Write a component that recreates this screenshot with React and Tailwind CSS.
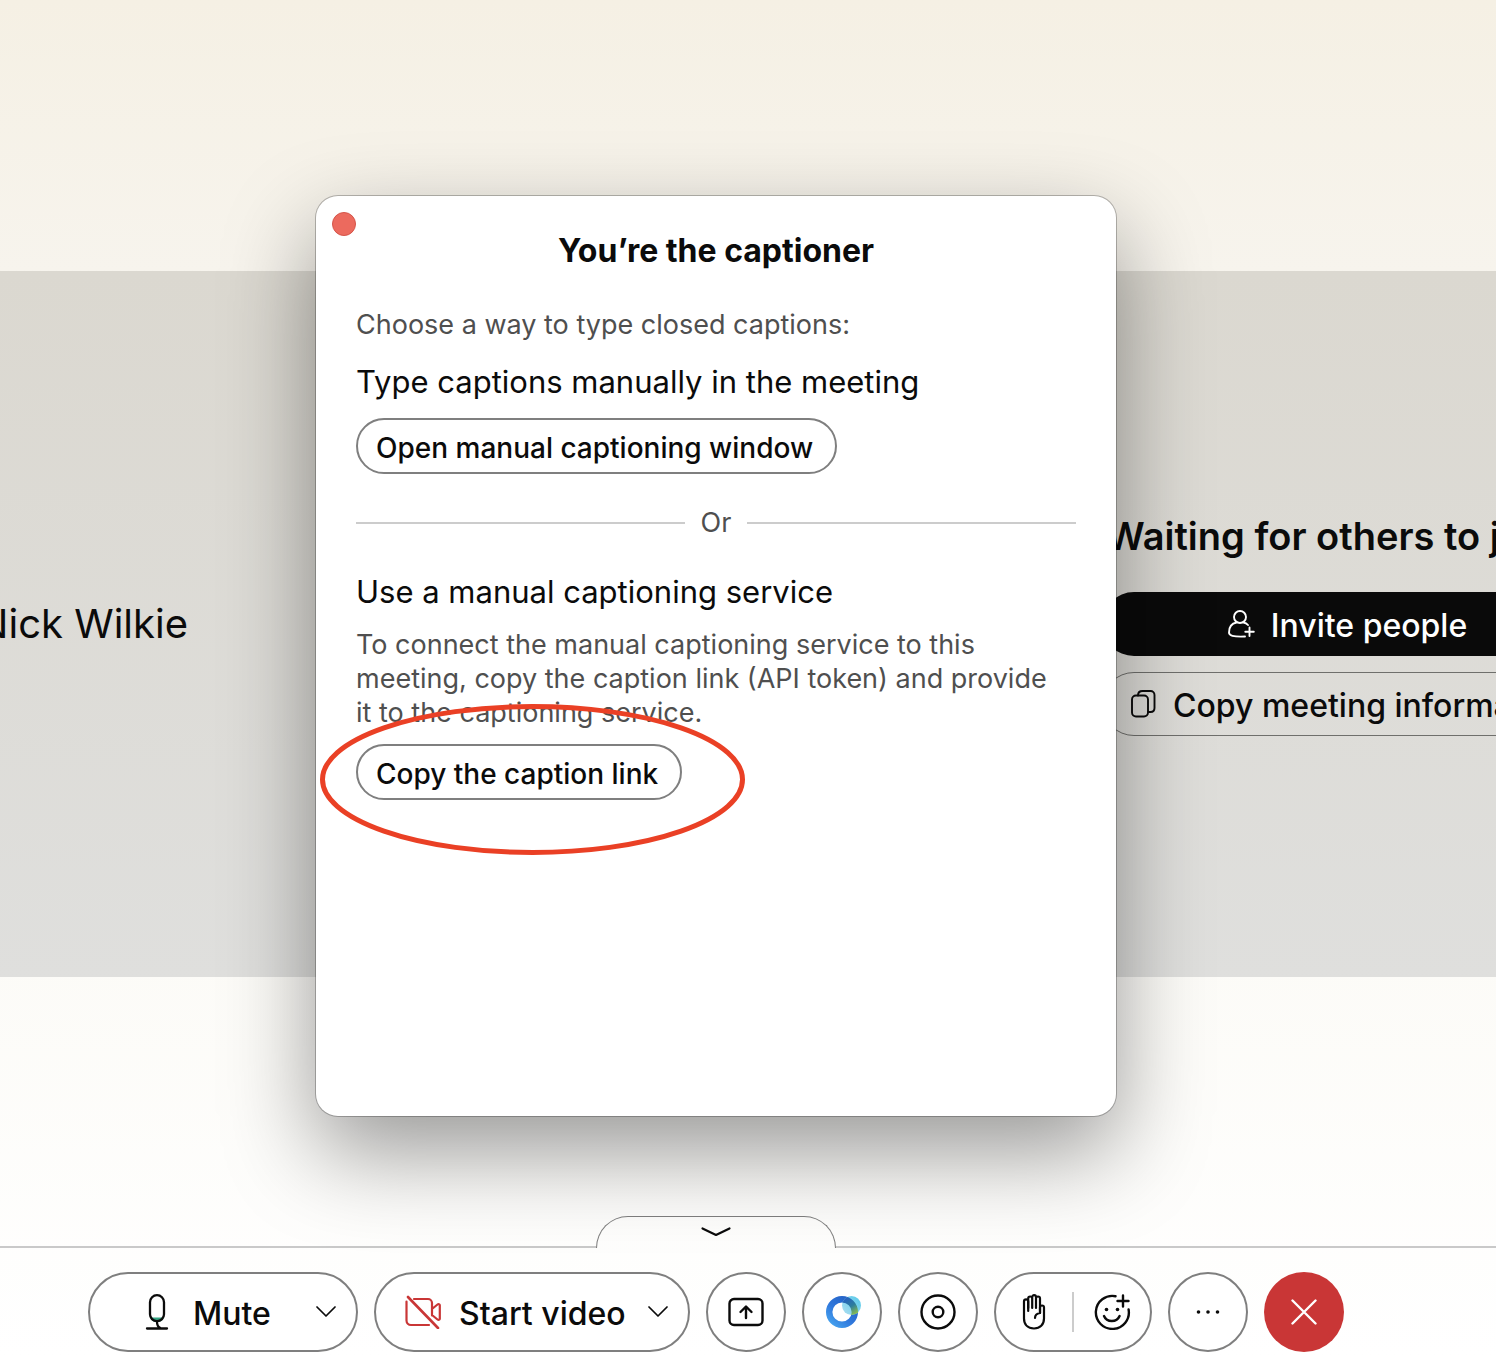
const pill = "rounded-full border-2 border-[#7f7f7f] bg-white";
const roundButton = "flex size-20 items-center justify-center rounded-full border-2 border-[#7f7f7f] bg-white";
const dialogButton = "flex h-14 items-center rounded-full border-2 border-[#7f7f7f] pr-[22px] pl-[18px] text-[28px] font-medium";

function ChevronIcon() {
  return (
    <svg width="20" height="12" viewBox="0 0 20 12" fill="none" stroke="#0b0b0b" strokeWidth="1.7" strokeLinecap="round" strokeLinejoin="round">
      <path d="M1 1l9 9 9-9" />
    </svg>
  );
}

function MicIcon() {
  return (
    <svg width="24" height="36" viewBox="0 0 24 36" fill="none" stroke="#0b0b0b" strokeWidth="2.3" strokeLinecap="round">
      <path d="M5 23.5h14c-1 3-3.5 4.5-7 4.5s-6-1.5-7-4.5z" fill="#35a583" stroke="none" />
      <rect x="5" y="1.2" width="14" height="26" rx="7" />
      <path d="M12 28c0 3 1 5 3.5 6M2 34.500h20" />
    </svg>
  );
}

function VideoOffIcon() {
  return (
    <svg width="36" height="34" viewBox="0 0 36 34" fill="none" stroke="#c93636" strokeWidth="2.2" strokeLinecap="round" strokeLinejoin="round">
      <path d="M9 4h14a4 4 0 0 1 4 4v12.5M1.5 6.500v19a4.500 4.500 0 0 0 4.500 4.500h18M27 14l5.500-4.500c1-.8 2.300-.3 2.300.8v13.400c0 1.100-1.300 1.600-2.300.8L27 20" />
      <path d="M3 2l30 31" strokeWidth="2.6" />
    </svg>
  );
}

function ShareIcon() {
  return (
    <svg width="36" height="30" viewBox="0 0 36 30" fill="none" stroke="#0b0b0b" strokeWidth="2.4" strokeLinecap="round" strokeLinejoin="round">
      <rect x="1.5" y="2" width="33" height="26" rx="4.5" />
      <path d="M18 21V10M12.500 15L18 9.500l5.500 5.500" />
    </svg>
  );
}

function AssistantIcon() {
  return (
    <svg width="38" height="34" viewBox="-3 0 38 34" fill="none">
      <defs>
        <linearGradient id="ring" x1="4" y1="30" x2="26" y2="4" gradientUnits="userSpaceOnUse">
          <stop offset="0" stopColor="#46a4f0" />
          <stop offset="0.45" stopColor="#3078dc" />
          <stop offset="1" stopColor="#2460c4" />
        </linearGradient>
        <linearGradient id="overlap" x1="19" y1="4" x2="29" y2="20" gradientUnits="userSpaceOnUse">
          <stop offset="0" stopColor="#2761c0" />
          <stop offset="0.5" stopColor="#2c7e9c" />
          <stop offset="1" stopColor="#8fc04a" />
        </linearGradient>
        <linearGradient id="bubble" x1="18" y1="18" x2="34" y2="4" gradientUnits="userSpaceOnUse">
          <stop offset="0" stopColor="#a5dcf0" />
          <stop offset="1" stopColor="#5ecbea" />
        </linearGradient>
        <clipPath id="bubbleClip">
          <circle cx="25.5" cy="10.5" r="9.5" />
        </clipPath>
      </defs>
      <circle cx="16" cy="17" r="12.8" stroke="url(#ring)" strokeWidth="6.4" />
      <circle cx="25.5" cy="10.5" r="9.5" fill="url(#bubble)" />
      <circle cx="16" cy="17" r="12.8" stroke="url(#overlap)" strokeWidth="6.4" clipPath="url(#bubbleClip)" />
    </svg>
  );
}

function RecordIcon() {
  return (
    <svg width="36" height="36" viewBox="0 0 36 36" fill="none" stroke="#0b0b0b" strokeWidth="2.4">
      <circle cx="18" cy="18" r="16.5" />
      <circle cx="18" cy="18" r="5.3" />
    </svg>
  );
}

function HandIcon() {
  return (
    <svg width="24" height="36" viewBox="0 0 24 36" fill="none" stroke="#0b0b0b" strokeWidth="2.2" strokeLinecap="round" strokeLinejoin="round">
      <path d="M6.200 17V7.500a2.100 2.100 0 0 0-4.200 0V24.500c0 6.200 4 10 10 10s10-3.800 10-10V13.500a2 2 0 0 0-4 0V19" />
      <path d="M6.200 14V4.500a2 2 0 0 1 4 0V14M10.200 14V3a1.900 1.900 0 0 1 3.800 0v11M14 14V4.500a2 2 0 0 1 4 0V19c-3.200.5-5 2-5 5" />
    </svg>
  );
}

function ReactionIcon() {
  return (
    <svg width="38" height="36" viewBox="0 0 38 36" fill="none" stroke="#0b0b0b" strokeWidth="2.4" strokeLinecap="round">
      <path d="M22.500 2.200A16.500 16.500 0 1 0 35.600 15.500M30 1.500v11M24.500 7h11" />
      <path d="M11 22c1.300 3.200 4.200 5 7.800 5s6.500-1.800 7.800-5" />
      <circle cx="13.5" cy="15.5" r="1.8" fill="#0b0b0b" stroke="none" />
      <circle cx="24.5" cy="15.5" r="1.8" fill="#0b0b0b" stroke="none" />
    </svg>
  );
}

function MoreIcon() {
  return (
    <svg width="24" height="6" viewBox="0 0 24 6" fill="#0b0b0b">
      <circle cx="2.5" cy="3" r="1.8" />
      <circle cx="12" cy="3" r="1.8" />
      <circle cx="21.5" cy="3" r="1.8" />
    </svg>
  );
}

function InviteIcon() {
  return (
    <svg width="28" height="30" viewBox="0 0 28 30" fill="none" stroke="#fff" strokeWidth="1.9" strokeLinecap="round">
      <circle cx="13" cy="8" r="6" />
      <path d="M9.500 13.500C4.500 14.500 2 18.500 2 23.500c0 3 4 4.500 16 4M16.500 13.500c2 .4 3.400 1.200 4.500 2.500M22.500 18.500v8.500M18.300 22.800h8.500" />
    </svg>
  );
}

function CopyIcon() {
  return (
    <svg className="shrink-0" width="26" height="30" viewBox="0 0 26 30" fill="none" stroke="#0b0b0b" strokeWidth="1.9" strokeLinecap="round">
      <rect x="1" y="6.5" width="16" height="21" rx="4" />
      <path d="M7 6.500C7 3.500 8.500 2 11.500 2h8a4 4 0 0 1 4 4v13c0 2.500-1.500 4-4 4h-2" />
    </svg>
  );
}

function Stage() {
  return (
    <main className="flex flex-1 items-center justify-between overflow-hidden bg-linear-to-b from-[#dbd8d0] to-[#dfdfdd]">
      <div className="flex w-[188px] justify-end">
        <p className="shrink-0 text-[40px] leading-12 whitespace-nowrap">Nick Wilkie</p>
      </div>
      <div className="w-[394px]">
        <div className="flex w-[490px] flex-col gap-4">
          <h2 className="mb-4 pl-1 text-[38px] leading-12 font-semibold whitespace-nowrap">Waiting for others to join</h2>
          <button className="flex h-16 items-center justify-center gap-4 rounded-full bg-[#0a0a0a] text-[32px] font-medium text-white">
            <InviteIcon />
            <span className="pt-1">Invite people</span>
          </button>
          <button className="flex h-16 items-center gap-4 rounded-full border border-[#6f6f6c] pl-7 text-[32px] font-medium whitespace-nowrap">
            <CopyIcon />
            <span className="pt-1">Copy meeting information</span>
          </button>
        </div>
      </div>
    </main>
  );
}

function CaptionerDialog() {
  return (
    <div className="absolute top-[196px] right-16 left-0 flex justify-center">
      <section
        role="dialog"
        aria-labelledby="dialog-title"
        className="relative min-h-[920px] w-[800px] rounded-[22px] bg-white px-10 pt-8 shadow-[0_0_0_1px_rgba(0,0,0,0.25),0_36px_92px_rgba(0,0,0,0.4)]"
      >
        <button aria-label="Close" className="absolute top-4 left-4 size-6 rounded-full border border-[#d5554a] bg-[#ec6a5e]" />
        <h1 id="dialog-title" className="text-center text-[32px] leading-[46px] font-bold">You’re the captioner</h1>
        <p className="mt-[34px] text-[27px] leading-[34px] text-[#4f4f4f]">Choose a way to type closed captions:</p>
        <h2 className="mt-5 text-[31px] leading-10">Type captions manually in the meeting</h2>
        <button className={`mt-4 ${dialogButton}`}>
          <span className="pt-1">Open manual captioning window</span>
        </button>
        <div className="mt-8 flex items-center gap-4 text-[27px] leading-[34px] text-[#4f4f4f]">
          <hr className="flex-1 border-t-2 border-[#cccccc]" />
          Or
          <hr className="flex-1 border-t-2 border-[#cccccc]" />
        </div>
        <h2 className="mt-8 text-[31px] leading-10">Use a manual captioning service</h2>
        <p className="mt-4 pr-4 text-[27px] leading-[34px] text-[#4f4f4f]">
          To connect the manual captioning service to this meeting, copy the caption link (API token) and provide it to the captioning service.
        </p>
        <div className="relative mt-3.5">
          <button className={dialogButton}>
            <span className="pt-1">Copy the caption link</span>
          </button>
          <svg className="pointer-events-none absolute -top-10 -left-9" width="426" height="152" viewBox="0 0 426 152" fill="none">
            <ellipse cx="212.5" cy="75.5" rx="210" ry="73" stroke="#ea4025" strokeWidth="5" />
          </svg>
        </div>
      </section>
    </div>
  );
}

function Toolbar() {
  return (
    <footer>
      <div className="flex h-8 items-end">
        <div className="flex-1 border-b-2 border-[#c9c9c9]" />
        <button aria-label="Hide controls" className="flex h-8 w-60 justify-center rounded-t-[32px] border border-b-0 border-[#7f7f7f] pt-2.5">
          <svg width="30" height="10" viewBox="0 0 30 10" fill="none" stroke="#0b0b0b" strokeWidth="2.2" strokeLinecap="round" strokeLinejoin="round">
            <path d="M1.500 1.500L15 8l13.500-6.500" />
          </svg>
        </button>
        <div className="flex-1 border-b-2 border-[#c9c9c9]" />
        <div className="w-16 border-b-2 border-[#c9c9c9]" />
      </div>
      <div className="flex justify-center gap-4 pt-6 pr-16 pb-1.5 text-[32px] font-medium">
        <div className={`flex h-20 w-[270px] items-center justify-between pr-5 pl-[55px] ${pill}`}>
          <button className="flex items-center gap-6">
            <MicIcon />
            <span className="pt-1">Mute</span>
          </button>
          <button aria-label="Audio options">
            <ChevronIcon />
          </button>
        </div>
        <div className={`flex h-20 w-[316px] items-center justify-between pr-5 pl-[29px] ${pill}`}>
          <button className="flex items-center gap-[18px] whitespace-nowrap">
            <VideoOffIcon />
            <span className="pt-1">Start video</span>
          </button>
          <button aria-label="Video options">
            <ChevronIcon />
          </button>
        </div>
        <button aria-label="Share" className={roundButton}>
          <ShareIcon />
        </button>
        <button aria-label="AI Assistant" className={roundButton}>
          <AssistantIcon />
        </button>
        <button aria-label="Record" className={roundButton}>
          <RecordIcon />
        </button>
        <div className={`flex h-20 w-[158px] items-center ${pill}`}>
          <button aria-label="Raise hand" className="flex flex-1 justify-center">
            <HandIcon />
          </button>
          <span className="h-10 w-0.5 bg-[#cccccc]" />
          <button aria-label="Reactions" className="flex flex-1 justify-center">
            <ReactionIcon />
          </button>
        </div>
        <button aria-label="More options" className={roundButton}>
          <MoreIcon />
        </button>
        <button aria-label="Leave meeting" className="flex size-20 items-center justify-center rounded-full bg-[#c93636]">
          <svg width="26" height="26" viewBox="0 0 26 26" stroke="#fff" strokeWidth="2.4" strokeLinecap="round">
            <path d="M1.500 1.500l23 23M24.500 1.500l-23 23" />
          </svg>
        </button>
      </div>
    </footer>
  );
}

export default function App() {
  return (
    <div className="relative flex min-h-screen flex-col overflow-hidden bg-linear-to-b from-[#fcfbf7] from-70% to-white font-['Inter',sans-serif] text-[#0b0b0b]">
      <header className="h-[271px] bg-linear-to-b from-[#f5f0e4] to-[#f7f4ed]" />
      <Stage />
      <div className="h-[239px]" />
      <CaptionerDialog />
      <Toolbar />
    </div>
  );
}
